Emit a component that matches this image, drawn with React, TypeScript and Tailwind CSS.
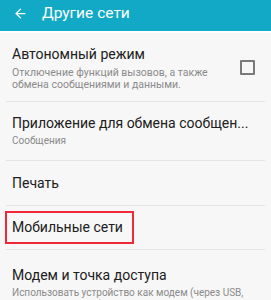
import { ArrowLeft } from "lucide-react";

// Android "Другие сети" settings screen with the mobile-networks row highlighted.

function Divider() {
  return <div className="mx-[6px] h-px bg-[#e4e4e4]" />;
}

export default function App() {
  return (
    <div className="h-[300px] w-[271px] overflow-hidden bg-[#f7f7f7] font-['Roboto',sans-serif]">
      {/* Action bar */}
      <div className="flex h-[31px] items-center bg-[#12a9c7] pb-[4px] text-white">
        <ArrowLeft className="ml-[13px] h-[15px] w-[15px]" strokeWidth={2} />
        <span className="ml-[14px] text-[15.5px] leading-none">Другие сети</span>
      </div>
      <div className="h-[2px] bg-white" />

      {/* Flight mode */}
      <div className="flex h-[68px] items-center pr-[16px] pl-[12px]">
        <div className="flex-1 pt-[2px]">
          <div className="text-[14px] leading-[17px] text-[#202020]">Автономный режим</div>
          <div className="mt-[4px] text-[10.5px] leading-[12px] text-[#8a8a8a]">
            Отключение функций вызовов, а также
            <br />
            обмена сообщениями и данными.
          </div>
        </div>
        <div className="h-[15px] w-[15px] rounded-[1px] border-2 border-[#7a7a7a]" />
      </div>
      <Divider />

      {/* Messaging app */}
      <div className="flex h-[58px] flex-col justify-center pl-[12px]">
        <div className="text-[14px] leading-[17px] text-[#202020]">Приложение для обмена сообщен...</div>
        <div className="mt-[3px] text-[10px] leading-[12px] text-[#8a8a8a]">Сообщения</div>
      </div>
      <Divider />

      {/* Print */}
      <div className="flex h-[44px] items-center pl-[12px]">
        <div className="text-[14px] leading-[17px] text-[#202020]">Печать</div>
      </div>
      <Divider />

      {/* Mobile networks, highlighted */}
      <div className="flex h-[43px] items-center">
        <div className="ml-[5px] flex h-[33px] w-[129px] items-center border-2 border-[#f0283a] pl-[5px]">
          <span className="text-[14px] leading-[17px] text-[#202020]">Мобильные сети</span>
        </div>
      </div>
      <Divider />

      {/* Tethering */}
      <div className="pt-[17px] pl-[12px]">
        <div className="text-[14px] leading-[17px] text-[#202020]">Модем и точка доступа</div>
        <div className="mt-[3px] text-[10px] leading-[12px] text-[#8a8a8a]">
          Использовать устройство как модем (через USB,
          <br />
          Wi-Fi или Bluetooth)
        </div>
      </div>
    </div>
  );
}
